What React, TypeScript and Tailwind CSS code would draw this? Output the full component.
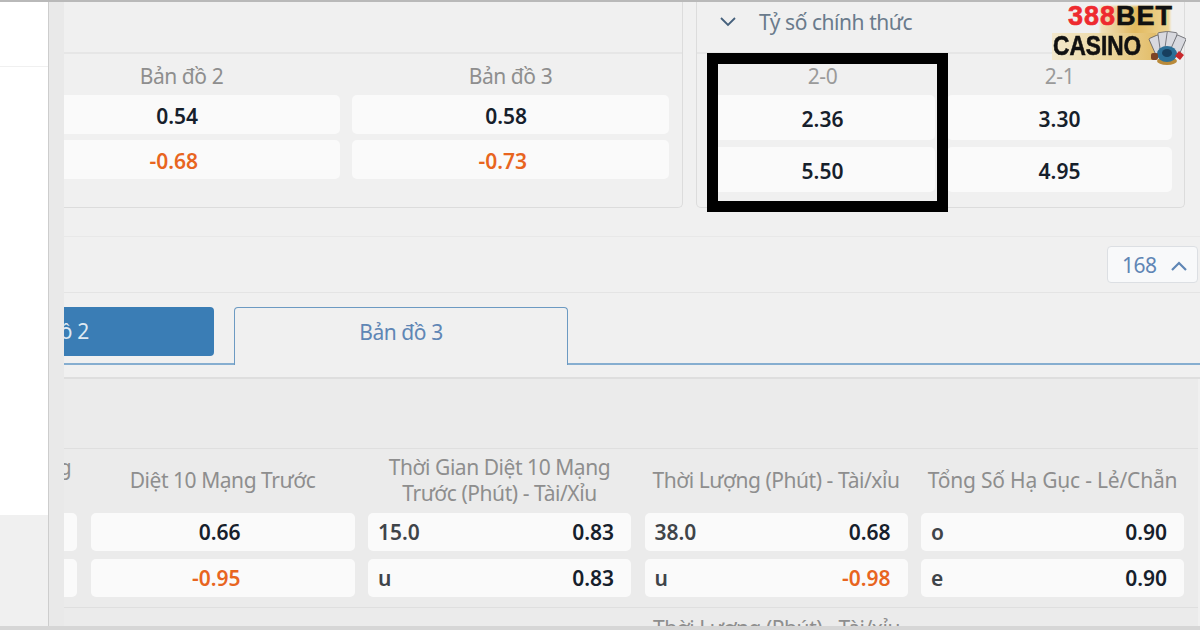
const cell = 'flex items-center rounded-[5px] bg-[#fafafa] font-semibold text-[21px] text-[#16202b]'
const head = 'text-[21px] leading-[26px] tracking-[-0.45px] text-[#8e8e8e] text-center'
const orange = 'text-[#e8651f]'

function Logo() {
  return (
    <div className="absolute left-[1052px] top-[5px] w-[134px] h-[57px]">
      <div className="absolute left-[48px] top-[1px] w-[70px] h-[32px] bg-gradient-to-r from-[#f0e2bd] via-[#e2b95e] to-[#efd795] blur-[1px]" />
      <div className="absolute left-[0px] top-[28px] w-[104px] h-[27px] bg-gradient-to-r from-[#f3e8cc] via-[#ecd9a4] to-[#e3bd68]" />
      <div className="absolute left-[16px] top-[-4px] font-['Liberation_Sans',sans-serif] font-bold text-[27px] leading-[30px] tracking-[1px] whitespace-nowrap [-webkit-text-stroke:0.6px]">
        <span className="text-[#ee2a2f]">388</span>
        <span className="text-[#111]">BET</span>
      </div>
      <div className="absolute left-[1px] top-[26px] origin-left scale-x-[0.84] font-['Liberation_Sans',sans-serif] font-bold text-[27px] leading-[30px] whitespace-nowrap text-[#111] [-webkit-text-stroke:0.6px]">CASINO</div>
      <svg className="absolute left-[96px] top-[25px]" width="38" height="36" viewBox="0 0 38 36">
        <g stroke="#55565c" strokeWidth="0.7" fill="#d8d9df">
          <rect x="4" y="6" width="10" height="17" rx="1" transform="rotate(-24 9 15)" />
          <rect x="11" y="2" width="10" height="17" rx="1" transform="rotate(-8 16 11)" />
          <rect x="18" y="2" width="10" height="17" rx="1" transform="rotate(8 23 11)" />
          <rect x="25" y="6" width="10" height="17" rx="1" transform="rotate(24 30 15)" />
        </g>
        <ellipse cx="19" cy="31" rx="10" ry="4" fill="#b98a3a" />
        <ellipse cx="19" cy="24" rx="10" ry="8" fill="#2c6f97" />
        <ellipse cx="19" cy="23" rx="5" ry="4" fill="#173f5f" />
        <rect x="3" y="23" width="7" height="7" rx="2" fill="#7d4426" />
        <path d="M31 21l5 4-4 5-5-4z" fill="#c8282c" />
      </svg>
    </div>
  )
}

function MiniPanelColumn({ title, top, bottom }: { title: string; top: string; bottom: string }) {
  return (
    <div className="w-[317px] shrink-0 flex flex-col">
      <div className="h-[41px] pt-[4px] flex items-center justify-center text-[21px] tracking-[-0.45px] text-[#8e8e8e]">{title}</div>
      <div className={`${cell} h-[39px] pt-[4px] justify-end pr-[142px]`}>{top}</div>
      <div className={`${cell} ${orange} h-[39px] pt-[4px] mt-[6px] justify-end pr-[142px]`}>{bottom}</div>
    </div>
  )
}

function ScoreColumn({ title, top, bottom }: { title: string; top: string; bottom: string }) {
  return (
    <div className="w-[225px] flex flex-col">
      <div className="h-[41px] pt-[4px] flex items-center justify-center text-[21px] tracking-[-0.45px] text-[#9a9a9a]">{title}</div>
      <div className={`${cell} h-[45px] pt-[4px] justify-center`}>{top}</div>
      <div className={`${cell} h-[45px] pt-[5px] mt-[7px] justify-center`}>{bottom}</div>
    </div>
  )
}

function OddsRow({ left, value, hot }: { left: string; value: string; hot?: boolean }) {
  return (
    <div className={`${cell} h-[38px] pt-[2px] justify-between pl-[10px] pr-[17px]`}>
      <span className="text-[#3f4449]">{left}</span>
      <span className={hot ? orange : ''}>{value}</span>
    </div>
  )
}

export default function App() {
  return (
    <div className="relative w-[1200px] h-[630px] overflow-hidden flex flex-col bg-[#f0f0f0] font-['Noto_Sans',sans-serif]">
      <div className="h-[2px] bg-[#b9b9b9]" />

      <div className="flex-1 flex min-h-0">
        <div className="w-[48px] flex flex-col">
          <div className="h-[65px] bg-white border-b border-[#f0f0f0]" />
          <div className="h-[448px] bg-white" />
          <div className="flex-1 bg-[#f0f0f0]" />
        </div>
        <div className="w-[16px] bg-[#e9e9e9] border-l border-[#cdcdcd]" />

        <div className="flex-1 min-w-0 overflow-hidden flex flex-col">
          {/* market panels */}
          <div className="h-[235px] shrink-0 border-b border-[#e8e8e8] flex">
            <div className="w-[619px] h-[206px] shrink-0 border-r border-b border-[#dcdcdc] rounded-br-[5px] overflow-hidden">
              <div className="h-[52px] border-b-2 border-[#e6e6e6]" />
              <div className="flex gap-[12px] ml-[-41px]">
                <MiniPanelColumn title="Bản đồ 2" top="0.54" bottom="-0.68" />
                <MiniPanelColumn title="Bản đồ 3" top="0.58" bottom="-0.73" />
              </div>
            </div>
            <div className="w-[489px] h-[206px] ml-[13px] shrink-0 border-x border-b border-[#dcdcdc] rounded-b-[5px]">
              <div className="h-[52px] border-b-2 border-[#e6e6e6] flex items-center pl-[22px] pb-[8px] gap-[22px] text-[21px] tracking-[-0.45px] text-[#6a7b8c]">
                <svg width="18" height="18" viewBox="0 0 18 18" fill="none" stroke="#45607c" strokeWidth="1.8" className="-mt-[3px]">
                  <path d="M2 5l7 7 7-7" />
                </svg>
                <span>Tỷ số chính thức</span>
              </div>
              <div className="flex gap-[12px] pl-[13px]">
                <ScoreColumn title="2-0" top="2.36" bottom="5.50" />
                <ScoreColumn title="2-1" top="3.30" bottom="4.95" />
              </div>
            </div>
          </div>

          {/* counter */}
          <div className="h-[56px] shrink-0 border-b border-[#e4e4e4] flex items-center justify-end pr-[2px]">
            <div className="w-[91px] h-[37px] pt-[2px] rounded-[4px] border border-[#dcdfe3] bg-[#f8f9fa] flex items-center justify-between pl-[14px] pr-[9px] text-[21px] tracking-[-0.45px] text-[#5f86b5]">
              <span>168</span>
              <svg width="18" height="18" viewBox="0 0 18 18" fill="none" stroke="#5f86b5" strokeWidth="2.2">
                <path d="M2 13l7-7 7 7" />
              </svg>
            </div>
          </div>

          {/* map tabs */}
          <div className="h-[86px] shrink-0 pt-[14px] border-b-2 border-[#dedede]">
            <div className="h-[58px] border-b-2 border-[#86aed0] flex items-start gap-[20px] ml-[-184px]">
              <div className="w-[334px] h-[49px] rounded-[4px] bg-[#3a7db5] flex items-center justify-center text-[21px] tracking-[-0.45px] text-[#dfe9f2]">Bản đồ 2</div>
              <div className="w-[334px] h-[58px] rounded-t-[4px] border border-b-0 border-[#6c9ac2] bg-[#f0f0f0] flex items-center justify-center pb-[8px] text-[21px] tracking-[-0.45px] text-[#5f86b5]">Bản đồ 3</div>
            </div>
          </div>

          {/* odds */}
          <div className="flex-1 min-h-0 mr-[2px] bg-[#ebebeb] overflow-hidden">
            <div className="h-[70px] border-b border-[#dfdfdf]" />
            <div className="grid grid-cols-[264px_264px_263px_263px_263px] gap-x-[13.5px] ml-[-251px] w-[1371px]">
              <div className={`${head} h-[64px] flex items-center justify-center pb-[2px] whitespace-nowrap`}>
                <span>Đội Đầu Tiên Diệt 10 Mạng<br />Trước</span>
              </div>
              <div className={`${head} h-[64px] flex items-center justify-center pb-[2px]`}>Diệt 10 Mạng Trước</div>
              <div className={`${head} h-[64px] flex items-center justify-center pb-[2px]`}>
                <span>Thời Gian Diệt 10 Mạng<br />Trước (Phút) - Tài/Xỉu</span>
              </div>
              <div className={`${head} h-[64px] flex items-center justify-center pb-[2px] whitespace-nowrap`}>Thời Lượng (Phút) - Tài/xỉu</div>
              <div className="text-[21px] leading-[26px] tracking-[-0.2px] text-[#8e8e8e] h-[64px] flex items-center justify-center pb-[2px] whitespace-nowrap">Tổng Số Hạ Gục - Lẻ/Chẵn</div>

              <div className={`${cell} h-[38px]`} />
              <div className={`${cell} h-[38px] pt-[2px] justify-end pr-[114px]`}>0.66</div>
              <OddsRow left="15.0" value="0.83" />
              <OddsRow left="38.0" value="0.68" />
              <OddsRow left="o" value="0.90" />

              <div className={`${cell} h-[38px] mt-[8px]`} />
              <div className={`${cell} ${orange} h-[38px] pt-[2px] mt-[8px] justify-end pr-[114px]`}>-0.95</div>
              <div className="mt-[8px]"><OddsRow left="u" value="0.83" /></div>
              <div className="mt-[8px]"><OddsRow left="u" value="-0.98" hot /></div>
              <div className="mt-[8px]"><OddsRow left="e" value="0.90" /></div>
            </div>
            <div className="mt-[10px] border-t border-[#dfdfdf] pl-[589px] pt-[8px] text-[21px] leading-[24px] tracking-[-0.45px] text-[#8e8e8e] whitespace-nowrap">Thời Lượng (Phút) - Tài/xỉu</div>
          </div>
        </div>
      </div>

      <div className="h-[4px] bg-[#d6d6d6]" />

      {/* highlight frame and site logo sit over the page */}
      <div className="absolute left-[707px] top-[53px] w-[241px] h-[159px] border-[11px] border-black" />
      <Logo />
    </div>
  )
}
